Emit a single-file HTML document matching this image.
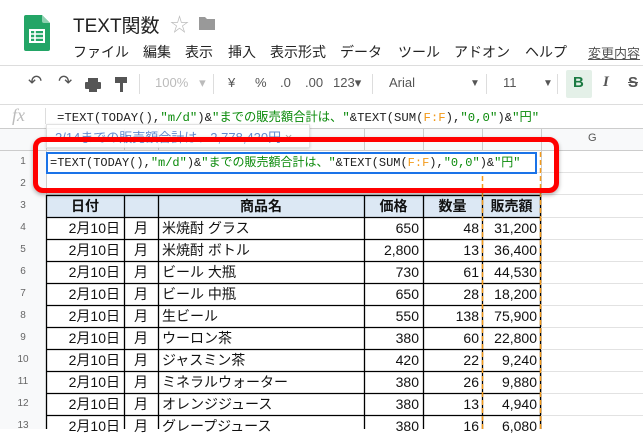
<!DOCTYPE html>
<html><head><meta charset="utf-8"><style>
*{margin:0;padding:0;box-sizing:border-box}
body{width:643px;height:429px;overflow:hidden;background:#fff;font-family:"Liberation Sans","Noto Sans CJK JP",sans-serif;position:relative;color:#222}
.a{position:absolute;white-space:nowrap}
.mono{font-family:"Liberation Mono","Noto Sans CJK JP",monospace}
.g{color:#0a8a0a}.o{color:#f39a1b}
.cell{position:absolute;font-size:14px;line-height:22px;white-space:nowrap;color:#111}
.r{text-align:right}
.hl{position:absolute;background:#e2e2e2;height:1px}
.vl{position:absolute;background:#e2e2e2;width:1px}
.rh{position:absolute;left:0;width:46px;text-align:center;font-size:10px;color:#666;line-height:22px}
.tb{position:absolute;top:75px;font-size:14px;color:#555}
.m{position:absolute;top:42px;font-size:14px;color:#222;white-space:nowrap}
</style></head><body>
<svg class="a" style="left:24px;top:15px" width="26" height="36" viewBox="0 0 26 36">
<path d="M2 0H18L26 8V34Q26 36 24 36H2Q0 36 0 34V2Q0 0 2 0Z" fill="#23a566"/>
<path d="M18 0L26 8H20Q18 8 18 6Z" fill="#8ed1b1"/>
<rect x="6" y="15" width="14" height="12" fill="none" stroke="#fff" stroke-width="2"/>
<path d="M6 19H20M6 23H20M11 15V27" stroke="#fff" stroke-width="1.6"/>
</svg>
<div class="a" style="left:73px;top:11px;font-size:19px;color:#222">TEXT関数</div>
<div class="a" style="left:170px;top:10px;font-size:19px;color:#bbb">☆</div>
<svg class="a" style="left:199px;top:16px" width="16" height="14"><path d="M0 1H6L8 3H16V14H0Z" fill="#999"/></svg>
<div class="m" style="left:73px">ファイル</div>
<div class="m" style="left:143px">編集</div>
<div class="m" style="left:185px">表示</div>
<div class="m" style="left:228px">挿入</div>
<div class="m" style="left:270px">表示形式</div>
<div class="m" style="left:340px">データ</div>
<div class="m" style="left:398px">ツール</div>
<div class="m" style="left:454px">アドオン</div>
<div class="m" style="left:525px">ヘルプ</div>
<div class="m" style="left:588px;font-size:13px;color:#555;text-decoration:underline;top:43px">変更内容</div>
<div class="hl" style="left:0;top:65px;width:643px;background:#ddd"></div>
<div class="tb" style="left:28px;font-size:17px;top:72px">↶</div>
<div class="tb" style="left:58px;font-size:17px;top:72px">↷</div>
<svg class="a" style="left:85px;top:78px" width="16" height="14"><rect x="3" y="0" width="10" height="4" fill="#555"/><rect x="0" y="4" width="16" height="7" rx="1" fill="#555"/><rect x="4" y="9" width="8" height="5" fill="#555"/></svg>
<svg class="a" style="left:115px;top:77px" width="12" height="15"><rect x="0" y="0" width="12" height="6" fill="#555"/><rect x="5" y="6" width="3" height="9" fill="#555"/></svg>
<div class="vl" style="left:139px;top:74px;height:20px;background:#ddd"></div>
<div class="tb" style="left:155px;color:#bbb;font-size:13px">100%&nbsp;&nbsp; ▾</div>
<div class="vl" style="left:213px;top:74px;height:20px;background:#ddd"></div>
<div class="tb" style="left:228px;font-size:13px">¥</div>
<div class="tb" style="left:255px;font-size:13px">%</div>
<div class="tb" style="left:280px;font-size:13px">.0</div>
<div class="tb" style="left:305px;font-size:13px">.00</div>
<div class="tb" style="left:333px;font-size:13px">123▾</div>
<div class="vl" style="left:372px;top:74px;height:20px;background:#ddd"></div>
<div class="tb" style="left:389px;font-size:13px">Arial</div>
<div class="tb" style="left:470px;font-size:10px;top:78px">▼</div>
<div class="vl" style="left:486px;top:74px;height:20px;background:#ddd"></div>
<div class="tb" style="left:503px;font-size:13px">11</div>
<div class="tb" style="left:543px;font-size:10px;top:78px">▼</div>
<div class="vl" style="left:557px;top:74px;height:20px;background:#ddd"></div>
<div class="a" style="left:566px;top:70px;width:26px;height:28px;background:#e4f0e8;border-radius:2px"></div>
<div class="tb" style="left:573px;font-weight:bold;color:#1c7a43;font-size:15px;top:74px">B</div>
<div class="tb" style="left:603px;font-style:italic;font-weight:bold;font-size:15px;font-family:'Liberation Serif',serif;top:74px">I</div>
<div class="tb" style="left:628px;font-weight:bold;font-size:15px;text-decoration:line-through;top:74px">S</div>
<div class="hl" style="left:0;top:104px;width:643px;background:#ddd"></div>
<div class="a" style="left:12px;top:105px;font-size:18px;font-style:italic;color:#bbb;font-family:'Liberation Serif',serif">fx</div>
<div class="vl" style="left:45px;top:108px;height:16px;background:#ddd"></div>
<div class="a mono" style="left:57px;top:107px;font-size:12.3px;color:#222">=TEXT(TODAY(),<span class="g">"m/d"</span>)&amp;<span class="g">"までの販売額合計は、"</span>&amp;TEXT(SUM(<span class="o">F:F</span>),<span class="g">"0,0"</span>)&amp;<span class="g">"円"</span></div>
<div class="a" style="left:0;top:128px;width:643px;height:22px;background:#f8f9fa"></div>
<div class="a" style="left:0;top:128px;width:46px;height:301px;background:#f8f9fa"></div>
<div class="hl" style="left:0;top:128px;width:643px;background:#ccc"></div>
<div class="hl" style="left:0;top:150px;width:643px;background:#ccc"></div>
<div class="a" style="left:588px;top:132px;font-size:11px;color:#555">G</div>
<div class="vl" style="left:46px;top:128px;height:301px;background:#ccc"></div>
<div class="vl" style="left:124px;top:128px;height:22px;background:#ccc"></div>
<div class="vl" style="left:158px;top:128px;height:22px;background:#ccc"></div>
<div class="vl" style="left:364px;top:128px;height:22px;background:#ccc"></div>
<div class="vl" style="left:423px;top:128px;height:22px;background:#ccc"></div>
<div class="vl" style="left:482px;top:128px;height:22px;background:#ccc"></div>
<div class="vl" style="left:541px;top:128px;height:301px;background:#ccc"></div>
<div class="a" style="left:46px;top:124px;width:264px;height:24px;background:#fff;border:1px solid #ddd;box-shadow:0 1px 3px rgba(0,0,0,.2);font-size:13px;color:#4a78c8;padding:2px 8px;overflow:hidden;opacity:.85">2/14までの販売額合計は、2,778,420円 <span style="color:#999">×</span></div>
<div class="hl" style="left:46px;top:172px;width:597px"></div>
<div class="hl" style="left:46px;top:194px;width:597px"></div>
<div class="rh" style="top:151px">1</div>
<div class="rh" style="top:173px">2</div>
<div class="a" style="left:46px;top:195px;width:495px;height:22px;background:#dce8f4"></div>
<svg class="a" style="left:0;top:0" width="643" height="429">
<g stroke="#000" stroke-width="1.3" fill="none">
<path d="M46 195.5H541M46 217.5H541M46 239.5H541M46 261.5H541M46 283.5H541M46 305.5H541M46 327.5H541M46 349.5H541M46 371.5H541M46 393.5H541M46 415.5H541"/>
<path d="M46.5 195V429M124.5 195V429M158.5 195V429M364.5 195V429M423.5 195V429M482.5 195V429M540.5 195V429"/>
</g>
<g stroke="#e2e2e2"><path d="M541 217.5H643M541 239.5H643M541 261.5H643M541 283.5H643M541 305.5H643M541 327.5H643M541 349.5H643M541 371.5H643M541 393.5H643M541 415.5H643"/></g>
<g stroke="#f39a1b" stroke-width="1.5" stroke-dasharray="5,3"><path d="M482.5 152V429M540.5 152V429"/></g>
</svg>
<div class="rh" style="top:195px">3</div><div class="rh" style="top:217px">4</div><div class="rh" style="top:239px">5</div><div class="rh" style="top:261px">6</div><div class="rh" style="top:283px">7</div><div class="rh" style="top:305px">8</div><div class="rh" style="top:327px">9</div><div class="rh" style="top:349px">10</div><div class="rh" style="top:371px">11</div><div class="rh" style="top:393px">12</div><div class="rh" style="top:415px">13</div>
<div class="cell" style="left:46px;width:78px;top:195px;text-align:center;font-weight:bold">日付</div>
<div class="cell" style="left:158px;width:206px;top:195px;text-align:center;font-weight:bold">商品名</div>
<div class="cell" style="left:364px;width:59px;top:195px;text-align:center;font-weight:bold">価格</div>
<div class="cell" style="left:423px;width:59px;top:195px;text-align:center;font-weight:bold">数量</div>
<div class="cell" style="left:482px;width:59px;top:195px;text-align:center;font-weight:bold">販売額</div>
<div class="cell r" style="left:46px;width:74px;top:217px">2月10日<br>2月10日<br>2月10日<br>2月10日<br>2月10日<br>2月10日<br>2月10日<br>2月10日<br>2月10日<br>2月10日</div>
<div class="cell" style="left:124px;width:34px;top:217px;text-align:center">月<br>月<br>月<br>月<br>月<br>月<br>月<br>月<br>月<br>月</div>
<div class="cell" style="left:162px;top:217px">米焼酎 グラス<br>米焼酎 ボトル<br>ビール 大瓶<br>ビール 中瓶<br>生ビール<br>ウーロン茶<br>ジャスミン茶<br>ミネラルウォーター<br>オレンジジュース<br>グレープジュース</div>
<div class="cell r" style="left:364px;width:55px;top:217px">650<br>2,800<br>730<br>650<br>550<br>380<br>420<br>380<br>380<br>380</div>
<div class="cell r" style="left:423px;width:56px;top:217px">48<br>13<br>61<br>28<br>138<br>60<br>22<br>26<br>13<br>16</div>
<div class="cell r" style="left:482px;width:55px;top:217px">31,200<br>36,400<br>44,530<br>18,200<br>75,900<br>22,800<br>9,240<br>9,880<br>4,940<br>6,080</div>
<div class="a" style="left:46px;top:152px;width:491px;height:22px;border:2px solid #1a73e8;background:#fff"></div>
<div class="a mono" style="left:50px;top:154px;font-size:12px;color:#222;line-height:18px">=TEXT(TODAY(),<span class="g">"m/d"</span>)&amp;<span class="g">"までの販売額合計は、"</span>&amp;TEXT(SUM(<span class="o">F:F</span>),<span class="g">"0,0"</span>)&amp;<span class="g">"円"</span></div>
<div class="a" style="left:33px;top:137px;width:526px;height:56px;border:5px solid #f00;border-radius:10px;box-shadow:0 2px 4px rgba(0,0,0,.3)"></div>
</body></html>
